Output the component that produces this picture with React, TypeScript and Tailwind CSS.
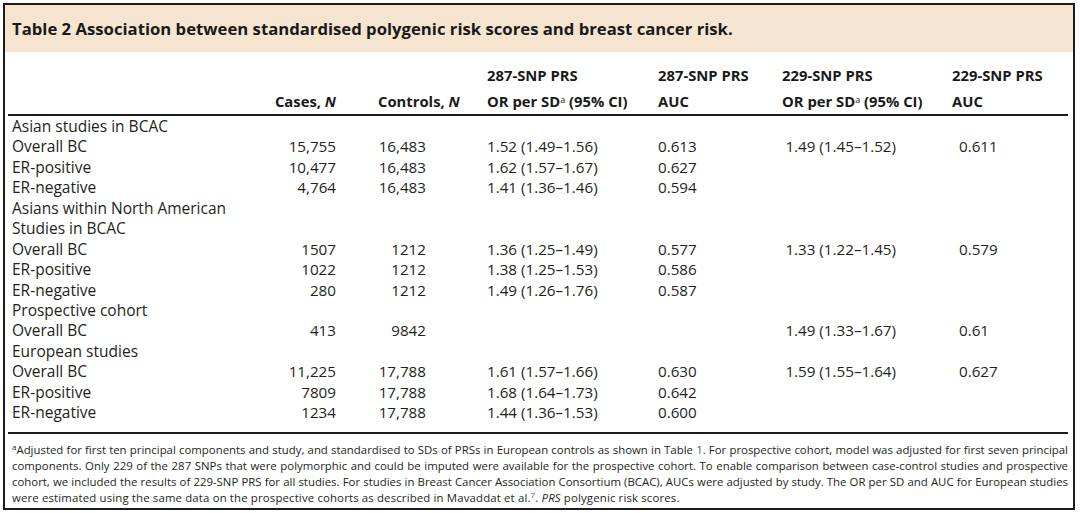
const rows: { label: string; cases?: string; controls?: string; or287?: string; auc287?: string; or229?: string; auc229?: string }[] = [
  { label: 'Asian studies in BCAC' },
  { label: 'Overall BC', cases: '15,755', controls: '16,483', or287: '1.52 (1.49–1.56)', auc287: '0.613', or229: '1.49 (1.45–1.52)', auc229: '0.611' },
  { label: 'ER-positive', cases: '10,477', controls: '16,483', or287: '1.62 (1.57–1.67)', auc287: '0.627' },
  { label: 'ER-negative', cases: '4,764', controls: '16,483', or287: '1.41 (1.36–1.46)', auc287: '0.594' },
  { label: 'Asians within North American' },
  { label: 'Studies in BCAC' },
  { label: 'Overall BC', cases: '1507', controls: '1212', or287: '1.36 (1.25–1.49)', auc287: '0.577', or229: '1.33 (1.22–1.45)', auc229: '0.579' },
  { label: 'ER-positive', cases: '1022', controls: '1212', or287: '1.38 (1.25–1.53)', auc287: '0.586' },
  { label: 'ER-negative', cases: '280', controls: '1212', or287: '1.49 (1.26–1.76)', auc287: '0.587' },
  { label: 'Prospective cohort' },
  { label: 'Overall BC', cases: '413', controls: '9842', or229: '1.49 (1.33–1.67)', auc229: '0.61' },
  { label: 'European studies' },
  { label: 'Overall BC', cases: '11,225', controls: '17,788', or287: '1.61 (1.57–1.66)', auc287: '0.630', or229: '1.59 (1.55–1.64)', auc229: '0.627' },
  { label: 'ER-positive', cases: '7809', controls: '17,788', or287: '1.68 (1.64–1.73)', auc287: '0.642' },
  { label: 'ER-negative', cases: '1234', controls: '17,788', or287: '1.44 (1.36–1.53)', auc287: '0.600' },
]

export default function App() {
  return (
    <div className="w-[1080px] h-[513px] bg-white pt-[3px] pl-[3px] font-['Open_Sans',sans-serif] text-[#231f20]">
      <div className="w-[1072px] h-[507px] border-2 border-[#1c1c1c] flex flex-col overflow-hidden">
        {/* Title band */}
        <div className="h-[47px] shrink-0 bg-[#f5e5d0] flex items-center pl-[7px] font-bold text-[16.7px] text-[#1a1a1a]">
          Table 2 Association between standardised polygenic risk scores and breast cancer risk.
        </div>

        <div className="px-[3px]">
          <table className="table-fixed border-collapse w-[1060px] whitespace-nowrap">
            <colgroup>
              <col className="w-[242px]" />
              <col className="w-[86px]" />
              <col className="w-[151px]" />
              <col className="w-[171px]" />
              <col className="w-[124px]" />
              <col className="w-[170px]" />
              <col className="w-[116px]" />
            </colgroup>
            <thead className="font-bold text-[14.8px] text-[#1a1a1a]">
              <tr className="h-[36px] align-bottom">
                <th />
                <th />
                <th />
                <th className="text-left font-bold pb-[2px]">287-SNP PRS</th>
                <th className="text-left font-bold pb-[2px]">287-SNP PRS</th>
                <th className="text-left font-bold pb-[2px]">229-SNP PRS</th>
                <th className="text-left font-bold pb-[2px]">229-SNP PRS</th>
              </tr>
              <tr className="h-[27px] border-b-2 border-[#1c1c1c] align-top">
                <th className="text-left" />
                <th className="text-right font-bold pt-[2px]">Cases, <i>N</i></th>
                <th className="text-left font-bold pl-[42px] pt-[2px]">Controls, <i>N</i></th>
                <th className="text-left font-bold pt-[2px]">OR per SD<sup className="font-normal text-[9px]">a</sup> (95% CI)</th>
                <th className="text-left font-bold pt-[2px]">AUC</th>
                <th className="text-left font-bold pt-[2px]">OR per SD<sup className="font-normal text-[9px]">a</sup> (95% CI)</th>
                <th className="text-left font-bold pt-[2px]">AUC</th>
              </tr>
            </thead>
            <tbody className="text-[15.2px] text-[#231f20]">
              <tr className="h-[1px]"><td colSpan={7} /></tr>
              {rows.map((r, i) => (
                <tr key={i} className="h-[20.43px] leading-[20.43px]">
                  <td className="pl-[4px] text-[15.5px]">{r.label}</td>
                  <td className="text-right">{r.cases}</td>
                  <td className="text-right pr-[61px]">{r.controls}</td>
                  <td className="text-right pr-[61px]">{r.or287}</td>
                  <td className="text-left">{r.auc287}</td>
                  <td className="text-right pr-[56px]">{r.or229}</td>
                  <td className="text-left pl-[7px]">{r.auc229}</td>
                </tr>
              ))}
              <tr className="h-[10px] border-b-2 border-[#1c1c1c]"><td colSpan={7} /></tr>
            </tbody>
          </table>

          {/* Footnote */}
          <div className="mt-[8px] pl-[4px] text-[11.4px] leading-[16px] text-[#231f20] w-[1060px] whitespace-nowrap">
            <p className="text-justify [text-align-last:justify]">
              <sup className="text-[8px]">a</sup>Adjusted for first ten principal components and study, and standardised to SDs of PRSs in European controls as shown in Table <span className="text-[#1f5fa8]">1</span>. For prospective cohort, model was adjusted for first seven principal
            </p>
            <p className="text-justify [text-align-last:justify]">
              components. Only 229 of the 287 SNPs that were polymorphic and could be imputed were available for the prospective cohort. To enable comparison between case-control studies and prospective
            </p>
            <p className="text-justify [text-align-last:justify]">
              cohort, we included the results of 229-SNP PRS for all studies. For studies in Breast Cancer Association Consortium (BCAC), AUCs were adjusted by study. The OR per SD and AUC for European studies
            </p>
            <p className="tracking-[0.15px]">
              were estimated using the same data on the prospective cohorts as described in Mavaddat et al.<sup className="text-[8px] text-[#1f5fa8]">7</sup>. <i>PRS</i> polygenic risk scores.
            </p>
          </div>
        </div>
      </div>
    </div>
  )
}
